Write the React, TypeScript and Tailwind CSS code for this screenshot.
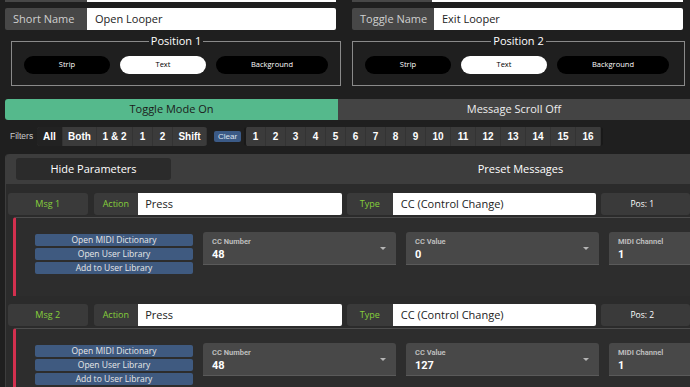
const numbers = ["1", "2", "3", "4", "5", "6", "7", "8", "9", "10", "11", "12", "13", "14", "15", "16"];

const filters = [
  { label: "All", w: "w-[26px]", active: true },
  { label: "Both", w: "w-[34px]" },
  { label: "1 & 2", w: "w-[36px]" },
  { label: "1", w: "w-[20px]" },
  { label: "2", w: "w-[20px]" },
  { label: "Shift", w: "w-[34px]" },
];

function NameRow({ label, value }: { label: string; value: string }) {
  return (
    <div className="flex h-[22px] w-[331px]">
      <div className="w-[82px] bg-[#474747] text-[#cfcfcf] text-[11px] flex items-center pl-[8px] rounded-l-[2px]">
        {label}
      </div>
      <div className="flex-1 bg-white text-[#222] text-[11px] flex items-center pl-[8px] rounded-r-[2px]">
        {value}
      </div>
    </div>
  );
}

function Position({ title, w }: { title: string; w: string }) {
  return (
    <fieldset className={`${w} h-[51px] border border-[#8a8a8a] px-[12px]`}>
      <legend className="mx-auto px-[2px] text-[11px] leading-[12px] text-white">{title}</legend>
      <div className="flex gap-[10px] mt-[9px] text-[7.5px]">
        <div className="w-[86px] h-[18px] rounded-full bg-black text-white flex items-center justify-center">
          Strip
        </div>
        <div className="w-[86px] h-[18px] rounded-full bg-white text-black flex items-center justify-center">
          Text
        </div>
        <div className="w-[112px] h-[18px] rounded-full bg-black text-white flex items-center justify-center">
          Background
        </div>
      </div>
    </fieldset>
  );
}

function Field({ label, value, arrow }: { label: string; value: string; arrow?: boolean }) {
  return (
    <div className="relative w-[193px] h-[33px] shrink-0 bg-[#484848] rounded-t-[3px] border-b border-[#5a5a5a] pl-[9px] pt-[5px] font-['Roboto',sans-serif]">
      <div className="text-[7.5px] leading-[9px] font-bold text-[#bdbdbd]">{label}</div>
      <div className="text-[11px] leading-[14px] font-bold text-white mt-[2px]">{value}</div>
      {arrow && (
        <div className="absolute right-[10px] top-[15px] w-0 h-0 border-l-[3px] border-r-[3px] border-t-[3px] border-l-transparent border-r-transparent border-t-[#b5b5b5]" />
      )}
    </div>
  );
}

function Message({ n, value }: { n: number; value: string }) {
  return (
    <div>
      <div className="flex h-[22px] text-[9px]">
        <div className="w-[80px] ml-[2px] bg-[#3a3a3a] rounded-[3px] text-[#86cf3a] flex items-center justify-center">
          Msg {n}
        </div>
        <div className="w-[45px] ml-[6px] bg-[#3a3a3a] rounded-l-[3px] text-[#86cf3a] flex items-center justify-center">
          Action
        </div>
        <div className="w-[205px] bg-white text-[#222] text-[11px] flex items-center pl-[7px] rounded-r-[2px]">
          Press
        </div>
        <div className="w-[46px] ml-[5px] bg-[#3a3a3a] rounded-l-[3px] text-[#86cf3a] flex items-center justify-center">
          Type
        </div>
        <div className="w-[204px] bg-white text-[#222] text-[11px] flex items-center pl-[8px] rounded-r-[2px]">
          CC (Control Change)
        </div>
        <div className="w-[90px] ml-[5px] bg-[#3a3a3a] rounded-[3px] text-white text-[8.5px] flex items-center justify-center pr-[6px]">
          Pos: {n}
        </div>
      </div>
      <div className="ml-[7px] mt-[2px] h-[79px] border-l-[3px] border-l-[#d3304f] border-t border-t-[#4d4d4d] bg-[#2d2d2d] rounded-tl-[3px] flex pl-[19px] pt-[14px] gap-[10px]">
        <div className="w-[158px] flex flex-col gap-[2px] mt-[2px] text-[8.5px] text-[#e8e8e8] shrink-0">
          <div className="h-[12px] bg-[#3f5a80] rounded-[2px] flex items-center justify-center">Open MIDI Dictionary</div>
          <div className="h-[12px] bg-[#3f5a80] rounded-[2px] flex items-center justify-center">Open User Library</div>
          <div className="h-[12px] bg-[#3f5a80] rounded-[2px] flex items-center justify-center">Add to User Library</div>
        </div>
        <Field label="CC Number" value="48" arrow />
        <Field label="CC Value" value={value} arrow />
        <Field label="MIDI Channel" value="1" />
      </div>
    </div>
  );
}

export default function App() {
  return (
    <div className="w-[690px] h-[387px] overflow-hidden bg-[#1f1f1f] text-white font-['Open_Sans',sans-serif]">
      {/* row cut off at the top */}
      <div className="flex mt-[-20px] h-[22px]">
        <div className="ml-[5px] w-[82px] bg-[#474747]" />
        <div className="w-[249px] bg-white" />
        <div className="ml-[16px] w-[80px] bg-[#474747]" />
        <div className="w-[251px] bg-white" />
      </div>

      <div className="flex mt-[6px]">
        <div className="ml-[5px] w-[336px]">
          <NameRow label="Short Name" value="Open Looper" />
          <div className="ml-[6px] mt-[5px]">
            <Position title="Position 1" w="w-[330px]" />
          </div>
        </div>
        <div className="ml-[11px] w-[333px]">
          <NameRow label="Toggle Name" value="Exit Looper" />
          <div className="mt-[5px]">
            <Position title="Position 2" w="w-[333px]" />
          </div>
        </div>
      </div>

      <div className="flex h-[21px] mt-[13px] text-[11px]">
        <div className="ml-[5px] w-[333px] bg-[#55b98c] text-[#1b1b1b] rounded-l-[3px] flex items-center justify-center">
          Toggle Mode On
        </div>
        <div className="flex-1 bg-[#444444] text-[#eeeeee] flex items-center justify-center">
          Message Scroll Off
        </div>
      </div>

      <div className="flex items-center mt-[7px] h-[19px] font-['Liberation_Sans',Arial,sans-serif]">
        <span className="ml-[10px] w-[27px] text-[8.5px] text-[#cccccc]">Filters</span>
        <div className="flex h-[19px] bg-[#3b3b3b] rounded-[3px] overflow-hidden text-[10px] font-bold">
          {filters.map((f) => (
            <div
              key={f.label}
              className={`${f.w} flex items-center justify-center border-r border-[#333333] ${f.active ? "bg-[#222222]" : ""}`}
            >
              {f.label}
            </div>
          ))}
        </div>
        <div className="ml-[7px] w-[27px] h-[11px] bg-[#3b5a86] rounded-[2px] text-[8px] text-[#dde3ee] flex items-center justify-center">
          Clear
        </div>
        <div className="ml-[3px] flex h-[19px] bg-[#3b3b3b] rounded-[3px] overflow-hidden border-l-2 border-r-2 border-[#191919] text-[10px] font-bold">
          {numbers.map((n) => (
            <div
              key={n}
              className={`${n.length > 1 ? "w-[25px]" : "w-[20px]"} flex items-center justify-center border-r border-[#333333]`}
            >
              {n}
            </div>
          ))}
        </div>
      </div>

      <div className="ml-[5px] mt-[8px] rounded-tl-[4px] border-l border-[#3d3d3d] bg-[#2b2b2b]">
        <div className="grid grid-cols-2 h-[30px] bg-[#3d3d3d] rounded-tl-[4px] items-center">
          <div className="ml-[10px] w-[155px] h-[22px] bg-[#2b2b2b] rounded-[3px] text-[11px] flex items-center justify-center">
            Hide Parameters
          </div>
          <div className="text-[11px] text-center pl-[3px]">Preset Messages</div>
        </div>
        <div className="flex flex-col gap-[8px] pt-[9px]">
          <Message n={1} value="0" />
          <Message n={2} value="127" />
        </div>
      </div>
    </div>
  );
}
